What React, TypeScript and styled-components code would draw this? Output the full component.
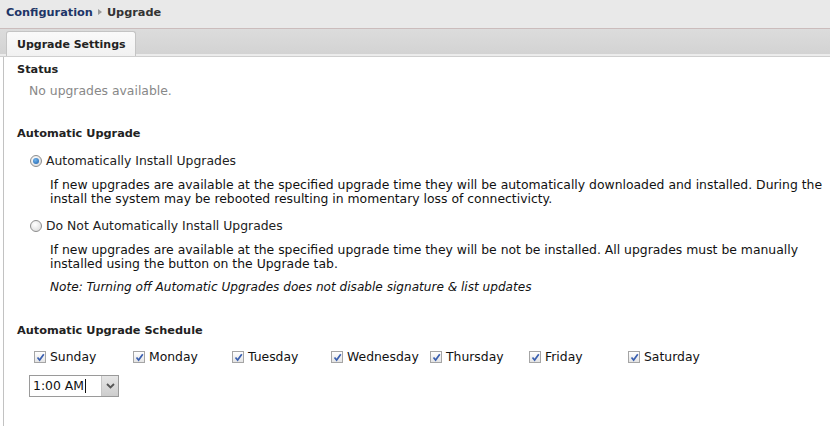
import styled, { createGlobalStyle } from "styled-components";

const GlobalStyle = createGlobalStyle`
	body {
		margin: 0;
		background: #fff;
		font-family: "DejaVu Sans", Verdana, sans-serif;
		color: #222;
	}
`;

const Breadcrumb = styled.div`
	display: flex;
	align-items: center;
	gap: 5px;
	height: 24px;
	padding: 0 0 4px 6px;
	background: #e9e9e9;
	border-bottom: 1px solid #cbbcbc;
	font-size: 11.3px;
	font-weight: bold;
`;

const Crumb = styled.span<{ $current?: boolean }>`
	color: ${(p) => (p.$current ? "#333" : "#1d3567")};
`;

const CrumbArrow = styled.span`
	width: 0;
	height: 0;
	border-top: 3px solid transparent;
	border-bottom: 3px solid transparent;
	border-left: 4px solid #999;
`;

const TabStrip = styled.div`
	display: flex;
	align-items: flex-end;
	height: 25px;
	padding-left: 6px;
	background: linear-gradient(#dcdcdc, #d3d3d3);
	border-bottom: 2px solid #ececec;
	box-shadow: 0 1px 0 #cfcfcf;
`;

const Tab = styled.div`
	display: flex;
	align-items: center;
	height: 24px;
	padding: 0 9px 0 10px;
	margin-bottom: -2px;
	background: linear-gradient(#fafafa, #f1f1f1);
	border: 1px solid #c4c4c4;
	border-bottom: none;
	border-radius: 3px 3px 0 0;
	font-size: 11px;
	font-weight: bold;
	color: #222;
`;

const Content = styled.div`
	margin-left: 3px;
	margin-top: 1px;
	padding: 6px 0 30px 13px;
	border-left: 1px solid #c2c2c2;
	min-height: 330px;
	font-size: 12.4px;
	line-height: 14px;
`;

const Heading = styled.div<{ $top?: number }>`
	margin-top: ${(p) => p.$top ?? 0}px;
	font-size: 11.3px;
	font-weight: bold;
	line-height: 14px;
	color: #222;
`;

const StatusText = styled.div`
	margin: 7px 0 0 12px;
	color: #888;
`;

const OptionRow = styled.label`
	display: flex;
	align-items: center;
	gap: 4px;
	margin: 13px 0 0 13px;
`;

const Radio = styled.span<{ $checked?: boolean }>`
	position: relative;
	width: 10px;
	height: 10px;
	border-radius: 50%;
	border: 1px solid #8d8d8d;
	background: radial-gradient(circle at 40% 35%, #fff, #d6d6d6);
	&::after {
		content: "";
		display: ${(p) => (p.$checked ? "block" : "none")};
		position: absolute;
		left: 2px;
		top: 2px;
		width: 6px;
		height: 6px;
		border-radius: 50%;
		background: radial-gradient(circle at 40% 35%, #6fb3ec, #1c5ea8);
	}
`;

const Description = styled.div<{ $top?: number }>`
	margin: ${(p) => p.$top ?? 10}px 2px 0 33px;
	color: #111;
`;

const Note = styled(Description)`
	font-style: italic;
	font-size: 12.1px;
`;

const Days = styled.div`
	display: grid;
	grid-template-columns: repeat(7, 99px);
	margin: 12px 0 0 17px;
`;

const Day = styled.label`
	display: flex;
	align-items: center;
	gap: 4px;
	color: #111;
`;

const Box = styled.span`
	display: flex;
	align-items: center;
	justify-content: center;
	width: 10px;
	height: 10px;
	border: 1px solid #a5a5a5;
	background: linear-gradient(#fff, #e4e4e4);
`;

const TimeSelect = styled.div`
	display: flex;
	width: 88px;
	height: 20px;
	margin: 11px 0 0 12px;
	border: 1px solid #9a9a9a;
`;

const TimeValue = styled.div`
	flex: 1;
	display: flex;
	align-items: center;
	padding-left: 3px;
	background: #fff;
	color: #111;
`;

const Caret = styled.span`
	width: 1px;
	height: 14px;
	margin-left: 1px;
	background: #111;
`;

const SelectButton = styled.div`
	display: flex;
	align-items: center;
	justify-content: center;
	width: 16px;
	border-left: 1px solid #c6c6c6;
	background: linear-gradient(#e6e6e6, #cdcdcd);
`;

const days = ["Sunday", "Monday", "Tuesday", "Wednesday", "Thursday", "Friday", "Saturday"];

function Check() {
	return (
		<svg width="9" height="9" viewBox="0 0 9 9">
			<path d="M1.5 4.5 L3.6 7 L7.8 1.2" fill="none" stroke="#3a5fb0" strokeWidth="1.7" />
		</svg>
	);
}

export default function App() {
	return (
		<>
			<GlobalStyle />
			<Breadcrumb>
				<Crumb>Configuration</Crumb>
				<CrumbArrow />
				<Crumb $current>Upgrade</Crumb>
			</Breadcrumb>
			<TabStrip>
				<Tab>Upgrade Settings</Tab>
			</TabStrip>
			<Content>
				<Heading>Status</Heading>
				<StatusText>No upgrades available.</StatusText>

				<Heading $top={29}>Automatic Upgrade</Heading>
				<OptionRow>
					<Radio $checked />
					Automatically Install Upgrades
				</OptionRow>
				<Description>
					If new upgrades are available at the specified upgrade time they will be automatically downloaded and
					installed. During the install the system may be rebooted resulting in momentary loss of connectivicty.
				</Description>
				<OptionRow>
					<Radio />
					Do Not Automatically Install Upgrades
				</OptionRow>
				<Description>
					If new upgrades are available at the specified upgrade time they will be not be installed. All upgrades
					must be manually installed using the button on the Upgrade tab.
				</Description>
				<Note $top={9}>Note: Turning off Automatic Upgrades does not disable signature &amp; list updates</Note>

				<Heading $top={30}>Automatic Upgrade Schedule</Heading>
				<Days>
					{days.map((day) => (
						<Day key={day}>
							<Box>
								<Check />
							</Box>
							{day}
						</Day>
					))}
				</Days>
				<TimeSelect>
					<TimeValue>
						1:00 AM
						<Caret />
					</TimeValue>
					<SelectButton>
						<svg width="9" height="6" viewBox="0 0 9 6">
							<path d="M1 1 L4.5 4.5 L8 1" fill="none" stroke="#555" strokeWidth="1.8" />
						</svg>
					</SelectButton>
				</TimeSelect>
			</Content>
		</>
	);
}
